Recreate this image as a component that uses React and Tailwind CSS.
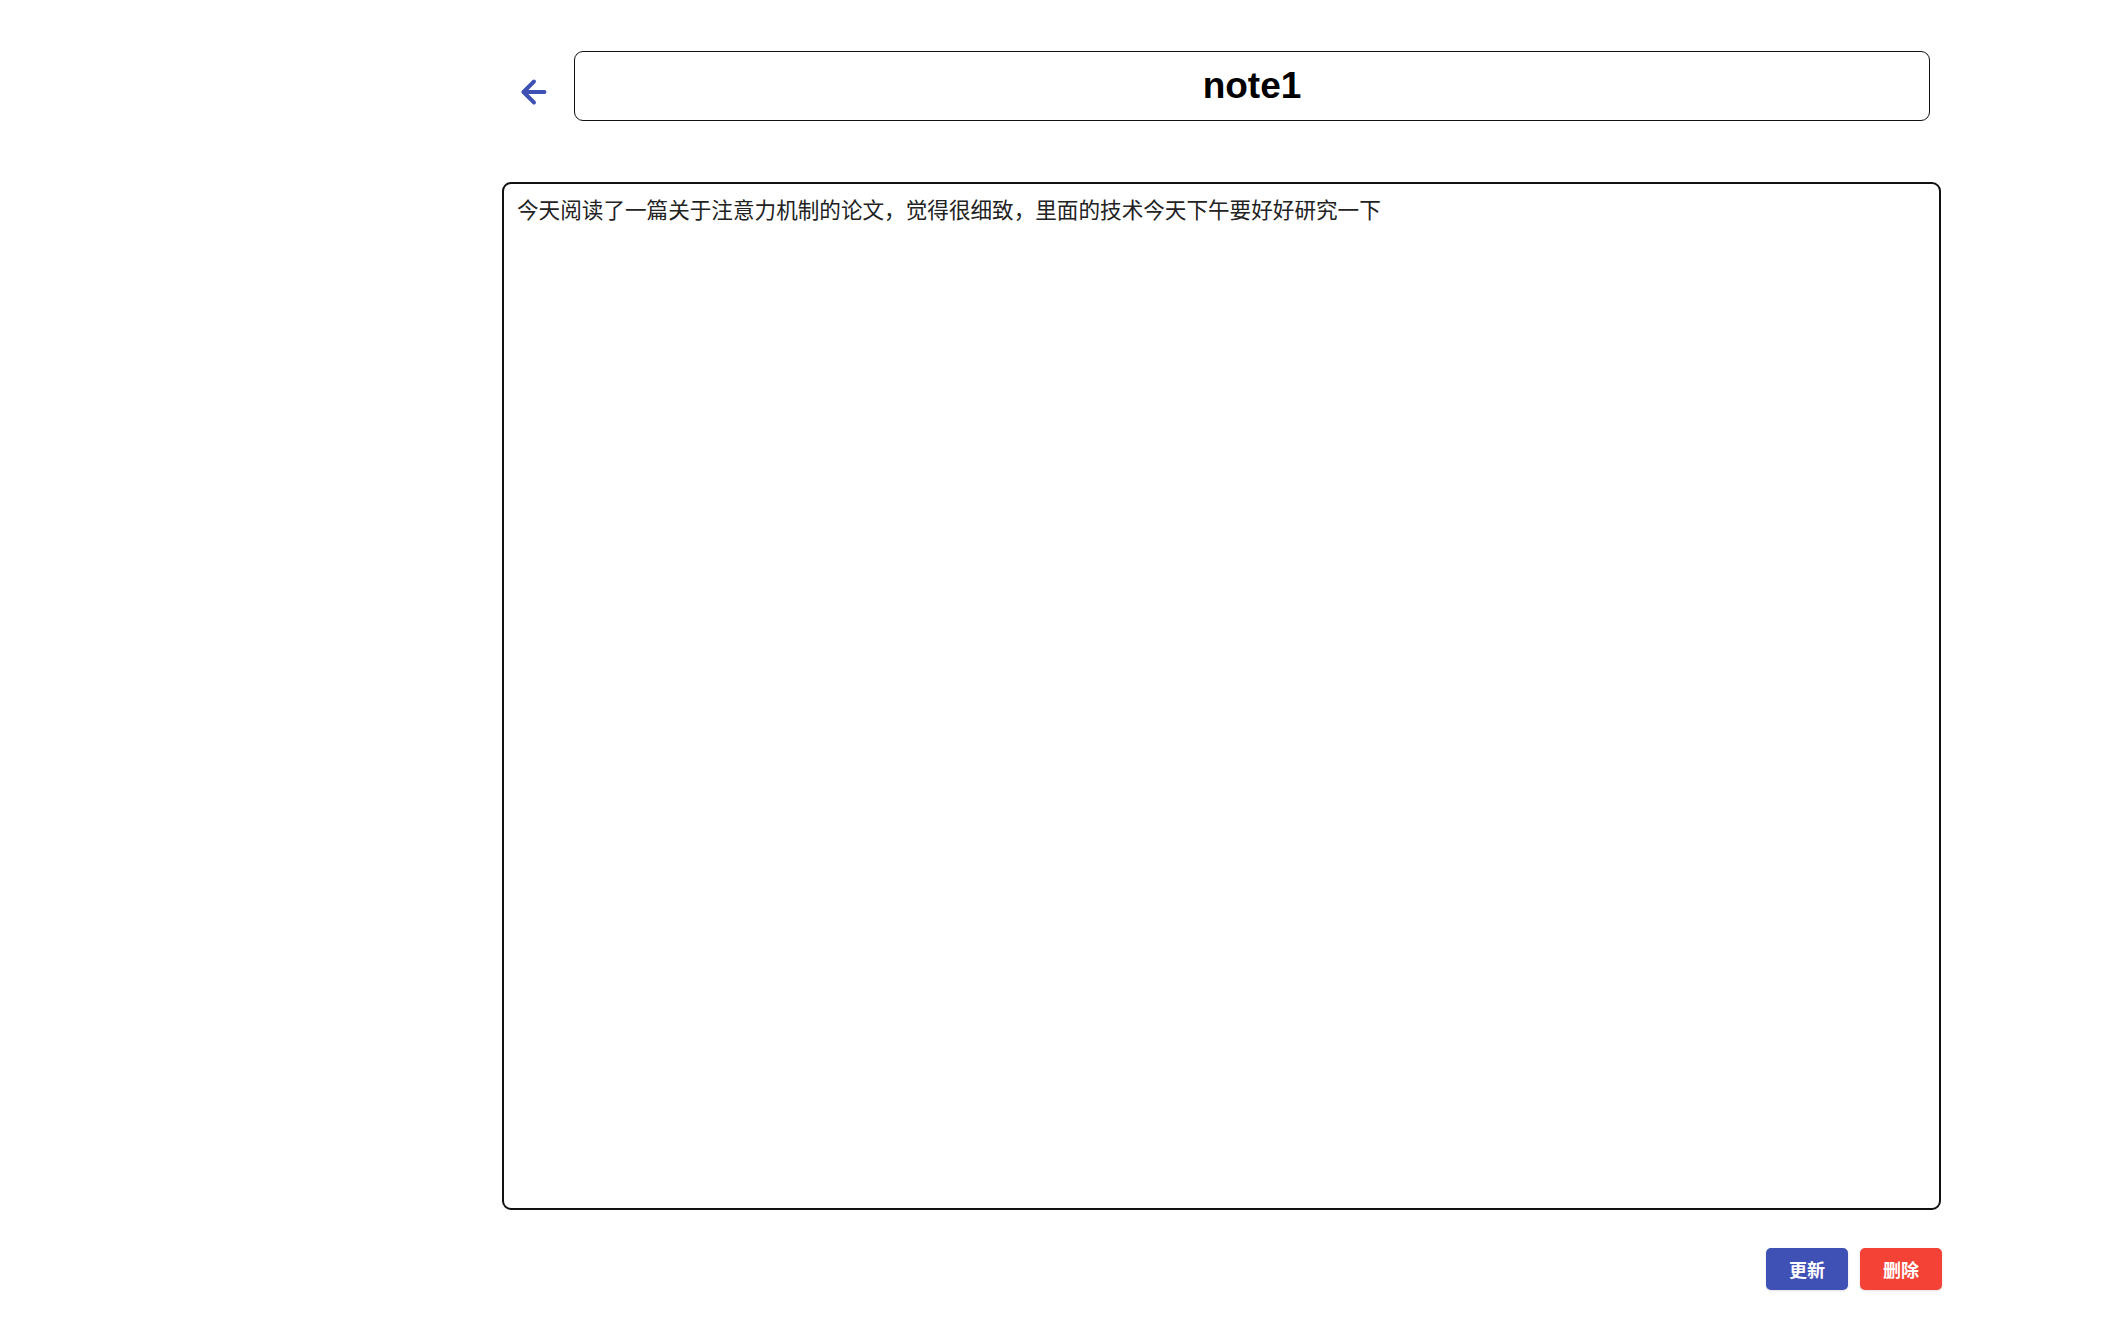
import React, { useState } from "react";
import { ArrowLeft } from "lucide-react";

export default function App() {
  const [title, setTitle] = useState("note1");
  const [body, setBody] = useState(
    "今天阅读了一篇关于注意力机制的论文，觉得很细致，里面的技术今天下午要好好研究一下"
  );
  return (
    <div className="min-h-screen bg-white pl-[502px] font-['Noto_Sans','Noto_Sans_CJK_SC',sans-serif]">
      <div className="flex w-[1440px] flex-col">
        <div className="mt-[51px] flex h-[70px] items-center">
          <button className="ml-[14px] mt-[11px] flex h-[36px] w-[36px] items-center justify-center text-[#3f51b5]">
            <ArrowLeft size={36} strokeWidth={2.6} />
          </button>
          <input
            value={title}
            onChange={(e) => setTitle(e.target.value)}
            className="ml-[22px] h-[70px] w-[1356px] rounded-[9px] border border-[#111] bg-white text-center font-['Liberation_Sans',Arial,sans-serif] text-[37px] font-bold text-black outline-none"
          />
        </div>
        <textarea
          value={body}
          onChange={(e) => setBody(e.target.value)}
          className="mt-[61px] h-[1028px] w-[1439px] resize-none rounded-[9px] border-2 border-[#111] bg-white px-[13px] py-[9px] font-['Noto_Sans_CJK_SC',sans-serif] text-[21.6px] leading-[1.5] text-[#222] outline-none"
        />
        <div className="mt-[38px] flex justify-end gap-[12px]">
          <button className="flex h-[42px] w-[82px] items-center justify-center rounded-[5px] bg-[#3f51b5] font-['Noto_Sans_CJK_SC',sans-serif] text-[18px] font-semibold text-white shadow-sm">
            更新
          </button>
          <button className="flex h-[42px] w-[82px] items-center justify-center rounded-[5px] bg-[#f44336] font-['Noto_Sans_CJK_SC',sans-serif] text-[18px] font-semibold text-white shadow-sm">
            删除
          </button>
        </div>
      </div>
    </div>
  );
}
